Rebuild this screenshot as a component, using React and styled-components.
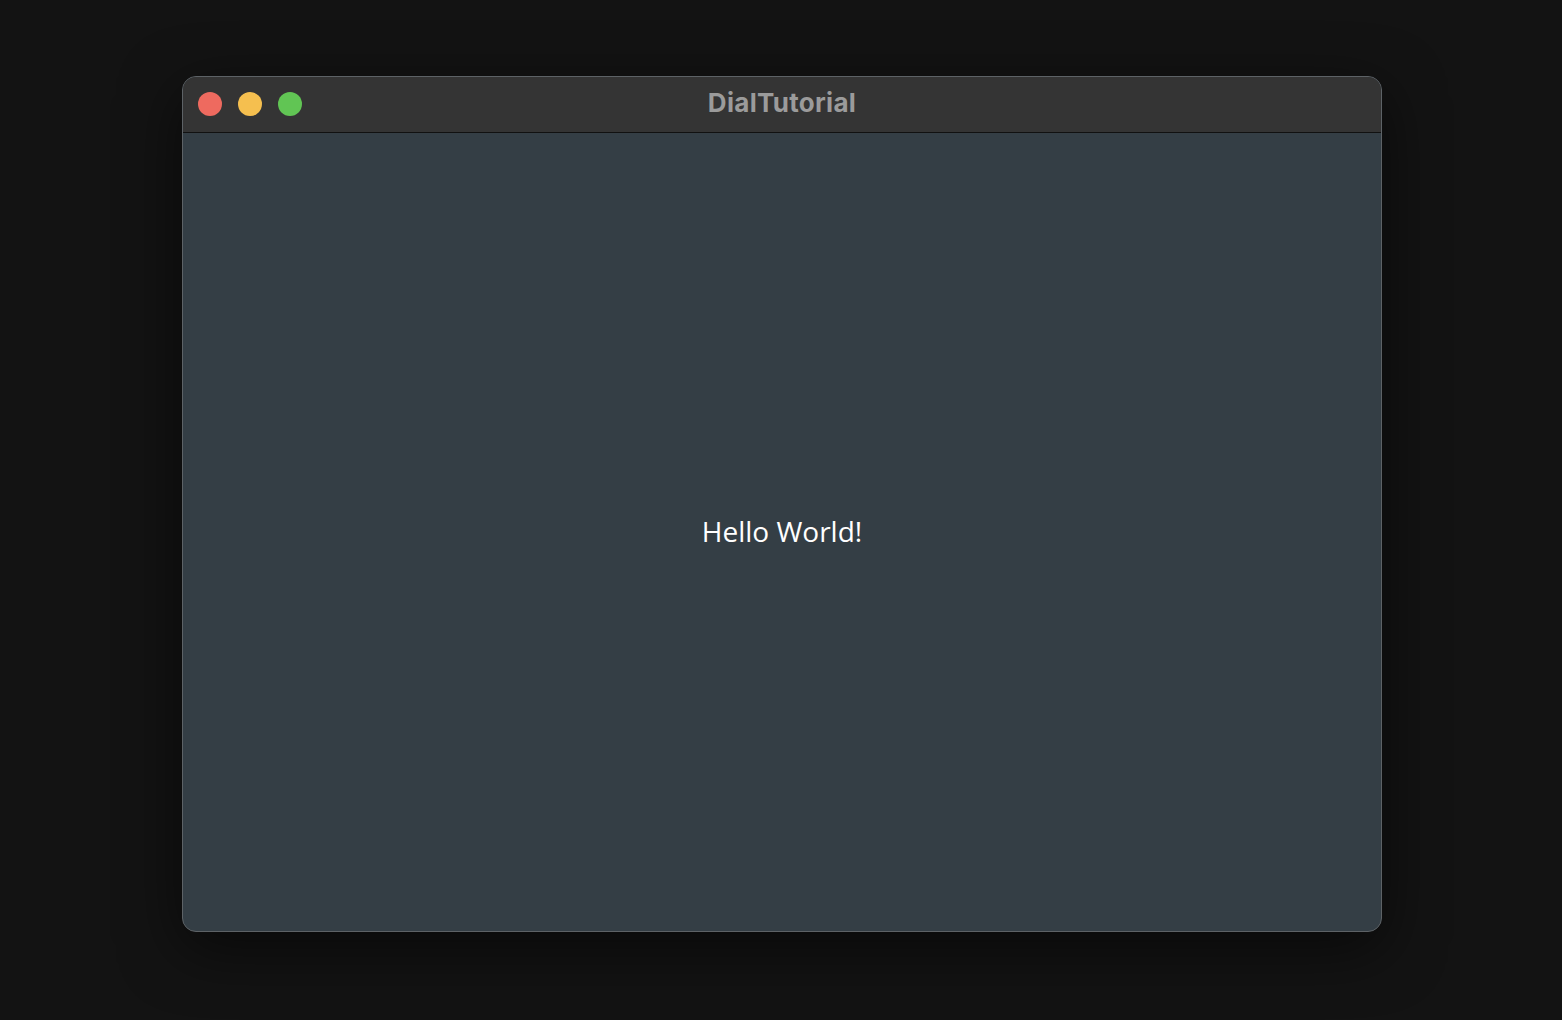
import React from "react";
import styled, { createGlobalStyle } from "styled-components";

const GlobalStyle = createGlobalStyle`
  html, body {
    margin: 0;
    padding: 0;
    background: #131313;
  }
`;

const Desktop = styled.div`
  width: 1562px;
  height: 1020px;
  box-sizing: border-box;
  padding: 76px 0 0 182px;
  background: #131313;
`;

const Window = styled.div`
  width: 1200px;
  height: 856px;
  box-sizing: border-box;
  display: flex;
  flex-direction: column;
  border: 1px solid #5d6266;
  border-radius: 14px;
  overflow: hidden;
  background: #343e45;
  box-shadow: 0 16px 60px rgba(0, 0, 0, 0.55);
`;

const TitleBar = styled.div`
  position: relative;
  height: 55px;
  flex-shrink: 0;
  display: flex;
  align-items: center;
  justify-content: center;
  background: #343434;
  border-bottom: 1px solid #111;
`;

const Lights = styled.div`
  position: absolute;
  left: 15px;
  top: 15px;
  display: flex;
  gap: 16px;
`;

const Light = styled.span`
  width: 24px;
  height: 24px;
  border-radius: 50%;
  background: ${({ color }) => color};
`;

const Title = styled.div`
  font-family: Inter, "Liberation Sans", sans-serif;
  font-weight: 700;
  font-size: 26px;
  letter-spacing: 0.3px;
  color: #9b9b9b;
  margin: 0 0 5px 0;
`;

const Content = styled.div`
  flex: 1;
  display: flex;
  align-items: center;
  justify-content: center;
`;

const Hello = styled.div`
  font-family: "Open Sans", "Noto Sans", sans-serif;
  font-size: 28px;
  font-weight: 500;
  color: #ffffff;
  margin-bottom: 2px;
`;

export default function App() {
  return (
    <>
      <GlobalStyle />
      <Desktop>
        <Window>
          <TitleBar>
            <Lights>
              <Light color="#ee6a5f" />
              <Light color="#f5bf4f" />
              <Light color="#61c554" />
            </Lights>
            <Title>DialTutorial</Title>
          </TitleBar>
          <Content>
            <Hello>Hello World!</Hello>
          </Content>
        </Window>
      </Desktop>
    </>
  );
}
